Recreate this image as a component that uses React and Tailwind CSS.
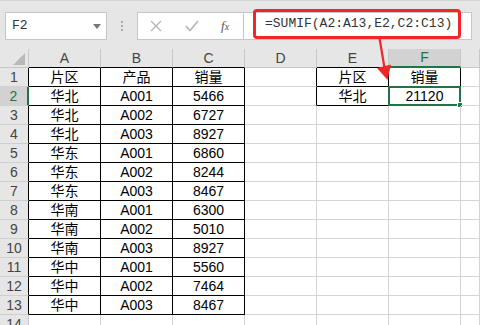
import React from 'react';

const colA = ['片区', '华北', '华北', '华北', '华东', '华东', '华东', '华南', '华南', '华南', '华中', '华中', '华中'];
const colB = ['产品', 'A001', 'A002', 'A003', 'A001', 'A002', 'A003', 'A001', 'A002', 'A003', 'A001', 'A002', 'A003'];
const colC = ['销量', '5466', '6727', '8927', '6860', '8244', '8467', '6300', '5010', '8927', '5560', '7464', '8467'];
const letters = ['A', 'B', 'C', 'D', 'E', 'F', ''];

const font = { fontFamily: '"Liberation Sans", "Noto Sans CJK SC", sans-serif' };

function cellText(r, c) {
	if (r <= 13) {
		if (c === 1) return colA[r - 1];
		if (c === 2) return colB[r - 1];
		if (c === 3) return colC[r - 1];
	}
	if (r === 1 && c === 5) return '片区';
	if (r === 1 && c === 6) return '销量';
	if (r === 2 && c === 5) return '华北';
	if (r === 2 && c === 6) return '21120';
	return '';
}

function inTable(r, c) {
	return (r <= 13 && c >= 1 && c <= 3) || (r <= 2 && c >= 5 && c <= 6);
}

function Cell({ r, c }) {
	// right edge is black when this cell or its right neighbour sits in a table
	const rightBlack = inTable(r, c) || inTable(r, c + 1);
	const bottomBlack = inTable(r, c) || inTable(r + 1, c);
	const cls = [
		'relative flex items-center justify-center text-[14px] text-black border-r border-b',
		rightBlack ? 'border-r-black' : 'border-r-[#d4d4d4]',
		bottomBlack ? 'border-b-black' : 'border-b-[#d4d4d4]',
	].join(' ');

	return (
		<div className={cls}>
			{cellText(r, c)}
			{r === 2 && c === 6 && (
				<div className="absolute -left-[1px] -top-[1px] -right-[1px] -bottom-[1px] border-2 border-[#217346]">
					<div className="absolute -right-[4px] -bottom-[4px] w-[6px] h-[6px] bg-[#217346] border border-white" />
				</div>
			)}
		</div>
	);
}

function RowHeader({ r }) {
	const selected = r === 2;
	const cls = [
		'flex items-center justify-center text-[14px] border-b border-b-[#cfcfcf]',
		selected ? 'bg-[#d2d2d2] border-r-2 border-r-[#217346] text-[#217346]' : 'bg-[#e6e6e6] border-r',
		!selected && (r <= 13 ? 'border-r-black text-[#444]' : 'border-r-[#c6c6c6] text-[#444]'),
	].filter(Boolean).join(' ');
	return <div className={cls}>{r}</div>;
}

function ColHeader({ c }) {
	const selected = c === 6;
	const bottomBlack = (c >= 1 && c <= 3) || c === 5;
	const cls = [
		'flex items-center justify-center text-[14px] border-r border-r-[#c8c8c8]',
		selected ? 'bg-[#d2d2d2] border-b-2 border-b-[#217346] text-[#217346]' : 'bg-[#e6e6e6] border-b text-[#444]',
		!selected && (bottomBlack ? 'border-b-black' : 'border-b-[#c6c6c6]'),
	].filter(Boolean).join(' ');
	return <div className={cls}>{letters[c - 1]}</div>;
}

function FormulaBar() {
	return (
		<div className="h-[49px] bg-[#e6e6e6] border-t border-t-[#d6d6d6] flex items-start pt-[11px]">
			<div className="ml-[5px] w-[102px] h-[28px] bg-white border border-[#c6c6c6] flex items-center justify-between pl-[6px] pr-[5px]">
				<span className="text-[13px] text-[#333]" style={{ fontFamily: '"Liberation Mono", monospace' }}>F2</span>
				<div className="w-0 h-0 border-l-[4px] border-r-[4px] border-t-[5px] border-l-transparent border-r-transparent border-t-[#777]" />
			</div>
			<div className="w-[30px] h-[28px] flex flex-col items-center justify-center gap-[2px]">
				<div className="w-[2px] h-[2px] bg-[#aaa]" />
				<div className="w-[2px] h-[2px] bg-[#aaa]" />
				<div className="w-[2px] h-[2px] bg-[#aaa]" />
			</div>
			<div className="w-[107px] h-[28px] bg-white border border-[#c6c6c6] flex items-center">
				<svg width="12" height="12" viewBox="0 0 12 12" className="ml-[12px]">
					<path d="M1 1 L11 11 M11 1 L1 11" stroke="#b4b4b4" strokeWidth="1.3" fill="none" />
				</svg>
				<svg width="14" height="12" viewBox="0 0 14 12" className="ml-[23px]">
					<path d="M1 6 L5 10.5 L13 1" stroke="#b4b4b4" strokeWidth="1.6" fill="none" />
				</svg>
				<span className="ml-[22px] text-[13px] italic text-[#555]" style={{ fontFamily: '"Liberation Serif", serif' }}>
					f<span className="text-[10px]">x</span>
				</span>
			</div>
			<div className="w-[228px] h-[28px] bg-white border border-[#c6c6c6] border-l-0 flex items-start pl-[9px]">
				<div className="-mt-[4px] w-[208px] h-[30px] border-[3px] border-[#f0262a] rounded-[4px] flex items-center pl-[9px]">
					<span className="text-[13px] text-[#333]" style={{ fontFamily: '"Liberation Mono", monospace' }}>
						=SUMIF(A2:A13,E2,C2:C13)
					</span>
				</div>
			</div>
		</div>
	);
}

export default function App() {
	const rows = Array.from({ length: 14 }, (_, i) => i + 1);
	const cols = [1, 2, 3, 4, 5, 6, 7];

	return (
		<div className="relative w-[480px] h-[325px] overflow-hidden bg-white" style={font}>
			<FormulaBar />
			<div className="grid grid-cols-[29px_repeat(6,72px)_1fr] auto-rows-[19px]">
				<div className="bg-[#e6e6e6] border-r border-b border-r-[#c8c8c8] border-b-[#c6c6c6] relative">
					<svg width="12" height="12" viewBox="0 0 12 12" className="absolute right-[3px] bottom-[2px]">
						<polygon points="12,0 12,12 0,12" fill="#b9b9b9" />
					</svg>
				</div>
				{cols.map(c => <ColHeader key={c} c={c} />)}
				{rows.map(r => (
					<React.Fragment key={r}>
						<RowHeader r={r} />
						{cols.map(c => <Cell key={c} r={r} c={c} />)}
					</React.Fragment>
				))}
			</div>
			<svg width="30" height="50" viewBox="0 0 30 50" className="absolute left-[370px] top-[36px]">
				<path d="M9.5 2 L14.5 32" stroke="#f0262a" strokeWidth="2.2" fill="none" />
				<polygon points="7,32 21,28.5 17.5,44" fill="#f0262a" />
			</svg>
		</div>
	);
}
